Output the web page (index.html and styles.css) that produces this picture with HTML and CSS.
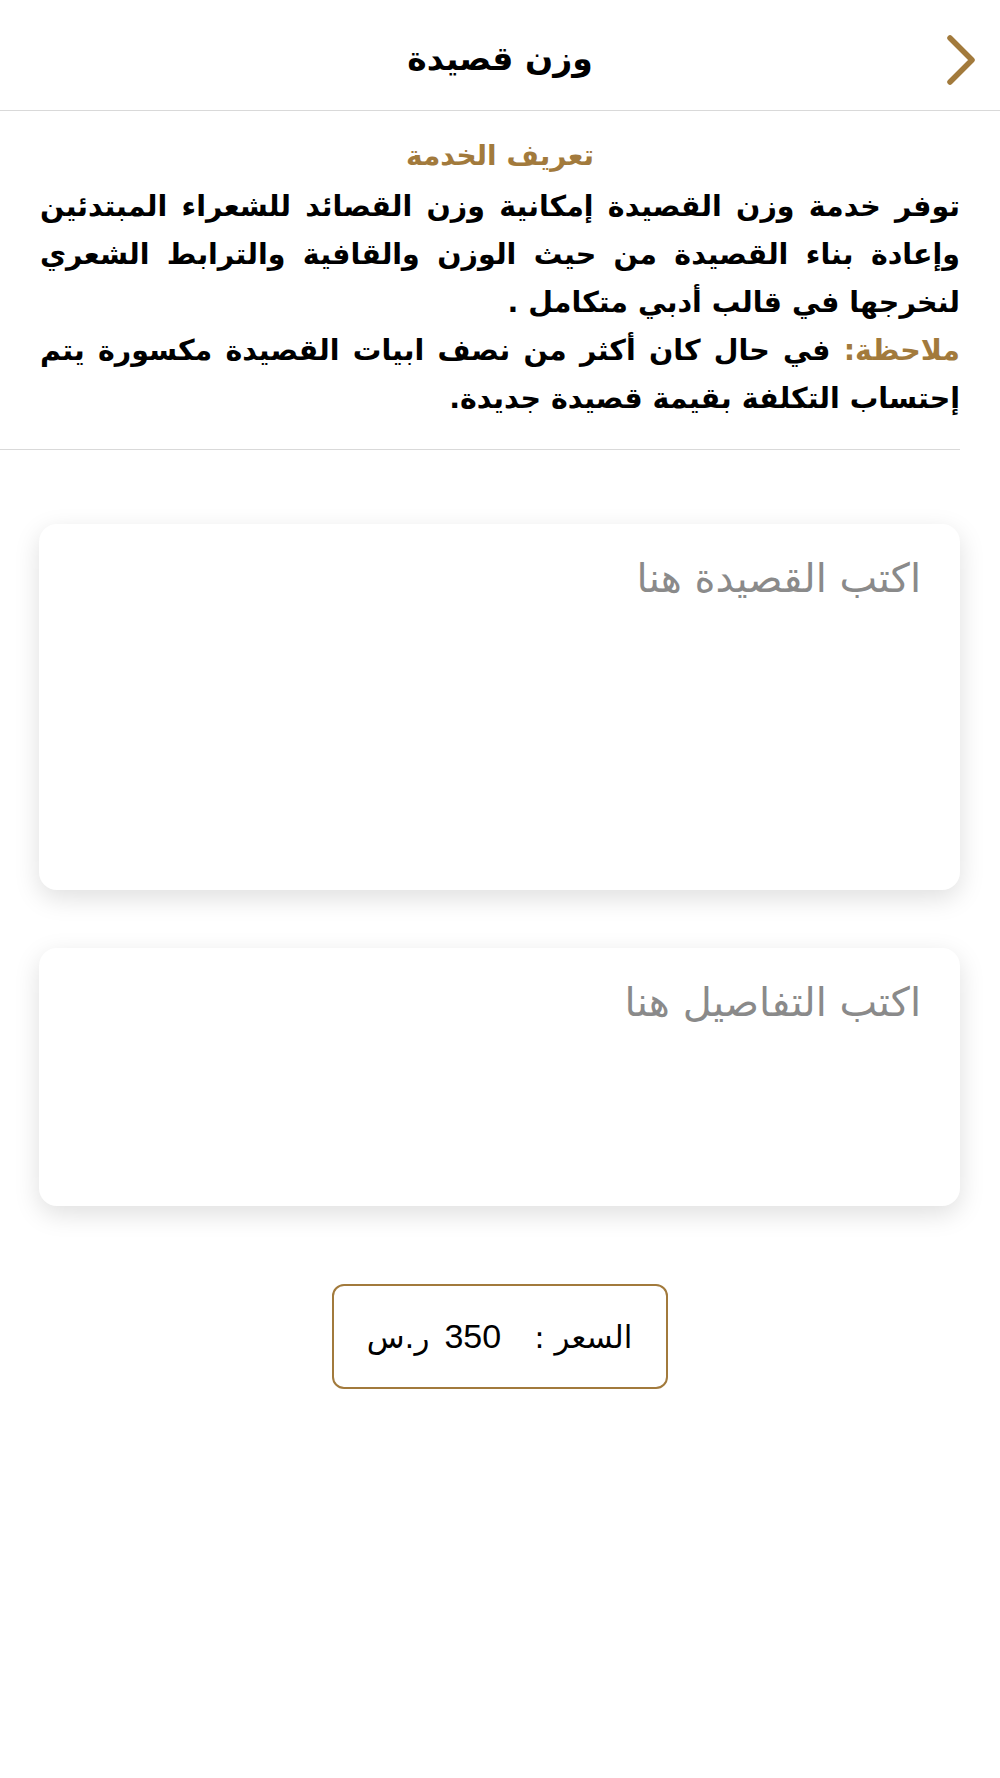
FILE: index.html
```html
<!DOCTYPE html>
<html lang="ar" dir="rtl">
<head>
<meta charset="utf-8">
<title>وزن قصيدة</title>
<link rel="stylesheet" href="styles.css">
</head>
<body>
<header class="topbar">
  <a class="back" href="#" aria-label="رجوع">
    <svg width="30" height="50" viewBox="0 0 30 50"><path d="M4 3 L26 25 L4 47" fill="none" stroke="#a27a3c" stroke-width="5.5" stroke-linecap="round" stroke-linejoin="round"/></svg>
  </a>
  <h1 class="title">وزن قصيدة</h1>
  <span class="spacer"></span>
</header>

<section class="intro">
  <h2 class="intro-title">تعريف الخدمة</h2>
  <div class="intro-text">
    <p class="line">توفر خدمة وزن القصيدة إمكانية وزن القصائد للشعراء المبتدئين</p>
    <p class="line">وإعادة بناء القصيدة من حيث الوزن والقافية والترابط الشعري</p>
    <p class="line last">لنخرجها في قالب أدبي متكامل .</p>
    <p class="line"><span class="note">ملاحظة:</span> في حال كان أكثر من نصف ابيات القصيدة مكسورة يتم</p>
    <p class="line last">إحتساب التكلفة بقيمة قصيدة جديدة.</p>
  </div>
</section>
<div class="divider"></div>

<main class="form">
  <div class="card card-poem"><span class="placeholder">اكتب القصيدة هنا</span></div>
  <div class="card card-details"><span class="placeholder">اكتب التفاصيل هنا</span></div>
  <div class="price"><span class="price-label">السعر :</span><span class="price-value">350</span><span class="price-cur">ر.س</span></div>
</main>
</body>
</html>
```

FILE: styles.css
```css
html, body {
  margin: 0;
  padding: 0;
  background: #ffffff;
}
body {
  width: 1000px;
  min-height: 1778px;
  font-family: "DejaVu Sans", "Noto Sans", sans-serif;
  color: #000;
  direction: rtl;
}
.topbar {
  height: 110px;
  border-bottom: 1px solid #d9d9d9;
  display: grid;
  grid-template-columns: 1fr auto 1fr;
  align-items: center;
}
.back {
  justify-self: start;
  display: flex;
  margin-right: 24px;
  margin-top: 10px;
}
.title {
  margin: 6px 0 0 0;
  font-size: 33px;
  font-weight: bold;
  line-height: 1;
}
.intro {
  padding: 23px 40px 0 40px;
}
.intro-title {
  margin: 0 0 5px 0;
  text-align: center;
  color: #a27a3c;
  font-size: 28px;
  font-weight: bold;
  line-height: 44px;
}
.intro-text {
  font-size: 28.5px;
  font-weight: bold;
  line-height: 48px;
}
.line {
  margin: 0;
  text-align: justify;
  text-align-last: justify;
  white-space: nowrap;
}
.line.last {
  text-align-last: start;
}
.note {
  color: #a27a3c;
}
.divider {
  margin: 26px 40px 0 0;
  border-bottom: 1px solid #d9d9d9;
}
.form {
  padding: 74px 40px 0 39px;
  display: flex;
  flex-direction: column;
}
.card {
  background: #fff;
  border-radius: 18px;
  box-shadow: 0 8px 26px rgba(0, 0, 0, 0.13);
  padding: 31px 39px;
  box-sizing: border-box;
}
.card-poem {
  height: 366px;
}
.card-details {
  height: 258px;
  margin-top: 58px;
}
.placeholder {
  color: #8a8a8a;
  font-size: 40px;
}
.price {
  align-self: center;
  margin-top: 78px;
  width: 336px;
  height: 105px;
  box-sizing: border-box;
  border: 2px solid #a27a3c;
  border-radius: 12px;
  display: flex;
  align-items: center;
  justify-content: center;
  gap: 15px;
  font-size: 31px;
}
.price-value {
  margin-right: 18px;
  font-size: 34px;
  font-family: "Liberation Sans", "DejaVu Sans", sans-serif;
}
```
